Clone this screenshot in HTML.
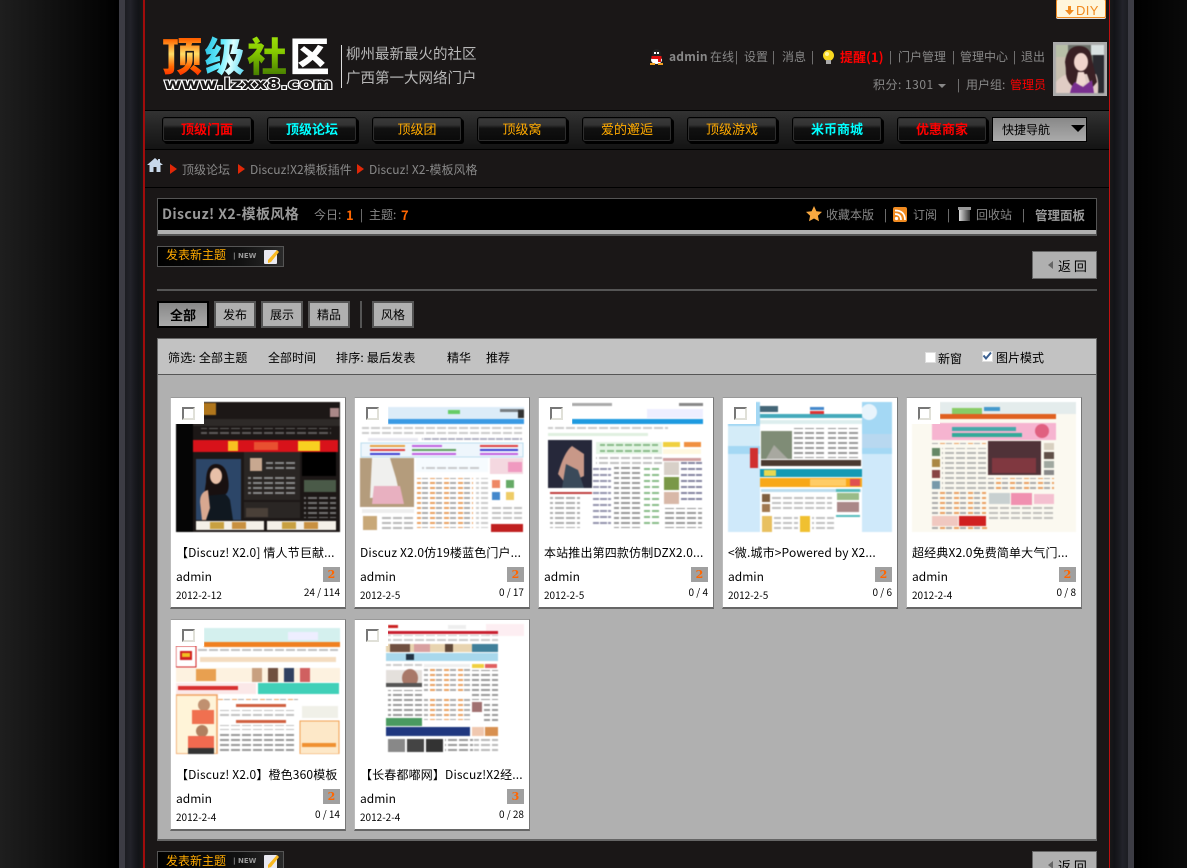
<!DOCTYPE html>
<html lang="zh"><head><meta charset="utf-8"><title>Discuz! X2-模板风格</title>
<style>
html,body{margin:0;padding:0;width:1187px;height:868px;overflow:hidden;background:#000}
body{position:relative;font:12px/14px "WenQuanYi Zen Hei","Noto Sans CJK SC",sans-serif;color:#888}
.a{position:absolute;white-space:nowrap}
svg{display:block}
.tb{background:#b0b0b0;border:2px solid #555;box-sizing:border-box;color:#000;text-align:center;height:27px;line-height:24px;font-size:12px;top:301px}
.nb{top:117px;width:90px;height:25px;box-sizing:border-box;border:1px solid #000;border-radius:3px;background:linear-gradient(#3a3a3a 0,#333 30%,#111 45%,#0a0a0a 100%);box-shadow:0 0 0 1px #2e2e2e inset,2px 2px 0 #000;text-align:center;font-size:13px;line-height:22px}
.card{position:absolute;width:176px;height:212px;background:#fff;border-top:1px solid #999;border-left:1px solid #bbb;border-right:1px solid #777;border-bottom:2px solid #666;box-sizing:border-box;color:#000}
.card svg{position:absolute;left:5px;top:4px;filter:blur(.6px)}
.ck{position:absolute;left:0;top:0;width:33px;height:26px;background:#fff}
.ck i{position:absolute;left:11px;top:9px;width:9px;height:9px;border:2px solid;border-color:#777 #e0e0d8 #e0e0d8 #777;background:#fff}
.t{position:absolute;left:5px;top:148px;width:166px;overflow:hidden;font-size:12px;line-height:14px;white-space:nowrap;letter-spacing:.15px}
.u{position:absolute;left:5px;top:172px;font-size:12px}
.d{position:absolute;left:5px;top:191px;font-size:10px;line-height:12px}
.n{position:absolute;right:5px;top:188px;font-size:10px;line-height:12px}
.b{position:absolute;right:5px;top:169px;width:17px;height:15px;background:#a0a0a0;color:#f60;font:bold 11px/15px "DejaVu Serif",serif;text-align:center}
.post{left:157px;width:127px;height:21px;box-sizing:border-box;border:1px solid #555;background:linear-gradient(90deg,#000 0,#111 65%,#2a2a2a 100%)}
.back{left:1032px;width:65px;height:28px;box-sizing:border-box;border:1px solid #666;background:#b0b0b0;color:#000;font-size:13px;line-height:27px}
</style></head><body>
<svg width="0" height="0" style="position:absolute"><defs>
<pattern id="l" width="11" height="5" patternUnits="userSpaceOnUse"><rect width="9" height="2" fill="#999"/></pattern>
<pattern id="w" width="11" height="5" patternUnits="userSpaceOnUse"><rect width="9" height="2" fill="#888"/></pattern>
<pattern id="o" width="14" height="5" patternUnits="userSpaceOnUse"><rect width="5" height="2" fill="#eaa060"/><rect x="6" width="6" height="2" fill="#aaa"/></pattern>
<pattern id="b" width="8" height="6" patternUnits="userSpaceOnUse"><rect width="7" height="2" fill="#668"/></pattern>
<pattern id="g" width="9" height="6" patternUnits="userSpaceOnUse"><rect width="7" height="2" fill="#8b8"/></pattern>
</defs></svg>

<!-- page frame -->
<div class="a" style="left:0;top:0;width:119px;height:868px;background:linear-gradient(90deg,#1e1e1e,#000)"></div>
<div class="a" style="left:119px;top:0;width:6px;height:868px;background:#3c3c44"></div>
<div class="a" style="left:125px;top:0;width:18px;height:868px;background:linear-gradient(90deg,#1c1d22 0,#22232a 30%,#1a1b20 50%,#121317 75%,#181818 100%)"></div>
<div class="a" style="left:143px;top:0;width:2px;height:868px;background:#a00c0c"></div>
<div class="a" style="left:145px;top:0;width:964px;height:868px;background:#1a1717"></div>
<div class="a" style="left:1109px;top:0;width:1px;height:868px;background:#c01010"></div>
<div class="a" style="left:1110px;top:0;width:18px;height:868px;background:linear-gradient(90deg,#181818 0,#121317 25%,#1a1b20 50%,#22232a 70%,#1c1d22 100%)"></div>
<div class="a" style="left:1128px;top:0;width:6px;height:868px;background:#3c3c44"></div>
<div class="a" style="left:1134px;top:0;width:53px;height:868px;background:linear-gradient(90deg,#000,#0a0a0a)"></div>

<!-- DIY -->
<div class="a" style="left:1056px;top:-1px;width:50px;height:19px;box-sizing:border-box;border:1px solid #f08a20;border-radius:2px;background:#fff6dc;color:#f08a20;font:13px/21px 'Liberation Sans',sans-serif;padding-left:19px;letter-spacing:.4px;box-shadow:0 1px 0 #ddd">DIY</div>
<svg class="a" style="left:1065px;top:6px" width="9" height="9"><path d="M3 0h3v4h3L4.500 9 0 4h3z" fill="#f08a20"/></svg>

<!-- logo -->
<div class="a" style="left:162px;top:30px;font:900 40px/48px 'Noto Sans CJK SC',sans-serif;letter-spacing:2.500px">
<span style="background:linear-gradient(#f00 0,#f60 25%,#fd6 50%,#f60 72%,#f00 100%);-webkit-background-clip:text;background-clip:text;color:transparent">顶</span><span style="background:linear-gradient(100deg,#2bd 0,#6ef 40%,#dff 60%,#3ce 100%);-webkit-background-clip:text;background-clip:text;color:transparent">级</span><span style="background:linear-gradient(#ae1 0,#8c0 45%,#360 100%);-webkit-background-clip:text;background-clip:text;color:transparent">社</span><span style="color:#fff">区</span></div>
<div class="a" style="left:164px;top:75px;font:bold 15px/19px 'DejaVu Sans',sans-serif;color:#1a1717;-webkit-text-stroke:2px #fff;paint-order:stroke fill;letter-spacing:.2px;transform:scaleX(1.27);transform-origin:0 0">www.lzxx8.com</div>
<div class="a" style="left:341px;top:45px;width:1px;height:43px;background:#ddd"></div>
<div class="a" style="left:346px;top:46px;font-size:14.500px;line-height:16px;color:#b8b8b8">柳州最新最火的社区</div>
<div class="a" style="left:346px;top:70px;font-size:14.500px;line-height:16px;color:#b8b8b8">广西第一大网络门户</div>

<!-- user -->
<svg class="a" style="left:649px;top:49px" width="15" height="16"><ellipse cx="7.500" cy="5" rx="4.500" ry="5" fill="#222"/><ellipse cx="7.500" cy="11" rx="5.500" ry="4" fill="#fff"/><rect x="2.500" y="7" width="10" height="3" fill="#e01010"/><rect x="9" y="9" width="3" height="4" fill="#e01010"/><path d="M1 14h5v2H1zM9 14h5v2H9z" fill="#f0a020"/><path d="M5 3h2v2H5zM8 3h2v2H8z" fill="#fff"/></svg>
<div class="a" style="left:669px;top:50px;font-weight:bold;font-size:12px;letter-spacing:.2px">admin</div>
<div class="a" style="left:710px;top:50px">在线</div><div class="a" style="left:735px;top:50px">|</div>
<div class="a" style="left:744px;top:50px">设置</div><div class="a" style="left:772px;top:50px">|</div>
<div class="a" style="left:782px;top:50px">消息</div><div class="a" style="left:811px;top:50px">|</div>
<svg class="a" style="left:822px;top:50px" width="13" height="14"><circle cx="6.500" cy="5.500" r="5.500" fill="#f8d820"/><circle cx="5" cy="4" r="2" fill="#fff6a0"/><rect x="4" y="10" width="5" height="4" fill="#aaa"/></svg>
<div class="a" style="left:840px;top:50px;color:#f00;font-weight:bold;font-size:13px">提醒(1)</div><div class="a" style="left:889px;top:50px">|</div>
<div class="a" style="left:898px;top:50px">门户管理</div><div class="a" style="left:952px;top:50px">|</div>
<div class="a" style="left:960px;top:50px">管理中心</div><div class="a" style="left:1013px;top:50px">|</div>
<div class="a" style="left:1021px;top:50px">退出</div>
<div class="a" style="left:873px;top:78px;letter-spacing:.5px">积分: 1301</div>
<div class="a" style="left:938px;top:84px;width:0;height:0;border:4px solid transparent;border-top-color:#888;border-bottom:0"></div>
<div class="a" style="left:957px;top:78px">|</div>
<div class="a" style="left:966px;top:78px">用户组:</div>
<div class="a" style="left:1010px;top:78px;color:#f00">管理员</div>
<svg class="a" style="left:1053px;top:42px" width="54" height="54"><rect width="54" height="54" fill="#aaa"/><g style="filter:blur(.5px)"><rect x="3" y="3" width="48" height="48" fill="#6a6f68"/><rect x="3" y="3" width="12" height="12" fill="#b8c0a8"/><rect x="3" y="15" width="10" height="25" fill="#c8c0b0"/><rect x="38" y="3" width="13" height="10" fill="#d8e0e0"/><rect x="40" y="13" width="11" height="38" fill="#2a2a30"/><path d="M3 40q6-7 12-8l28 0q3 6 2 19H3z" fill="#e0ccc4"/><path d="M12 20q2-16 14-16t13 14q3 12 5 22l-5 6-5-14-9 0-3 14q-8-5-9-14 0-6-1-12z" fill="#3a2024"/><ellipse cx="28" cy="20" rx="7" ry="9" fill="#f0d4cc"/><path d="M17 51q2-9 5-11l8 5 9-7 2 13z" fill="#7a3090"/><path d="M25 30h6l2 11-5 3-5-3z" fill="#f0d8d0"/></g></svg>

<!-- nav -->
<div class="a" style="left:145px;top:110px;width:964px;height:40px;box-sizing:border-box;border-top:1px solid #000;border-bottom:1px solid #000;background:linear-gradient(#333 0,#262626 35%,#141414 100%)"></div>
<div class="a nb" style="left:162px;color:#f00;font-weight:bold">顶级门面</div>
<div class="a nb" style="left:267px;color:#0ff;font-weight:bold">顶级论坛</div>
<div class="a nb" style="left:372px;color:#fa0">顶级团</div>
<div class="a nb" style="left:477px;color:#fa0">顶级窝</div>
<div class="a nb" style="left:582px;color:#fa0">爱的邂逅</div>
<div class="a nb" style="left:687px;color:#fa0">顶级游戏</div>
<div class="a nb" style="left:792px;color:#0ff;font-weight:bold">米币商城</div>
<div class="a nb" style="left:897px;color:#f00;font-weight:bold">优惠商家</div>
<div class="a" style="left:992px;top:117px;width:95px;height:25px;box-sizing:border-box;border:1px solid #000;background:linear-gradient(#888,#aaa);color:#000;font-size:12px;line-height:24px;padding-left:9px">快捷导航</div>
<div class="a" style="left:1071px;top:125px;width:0;height:0;border:7px solid transparent;border-top:7px solid #000;border-bottom:0"></div>

<!-- breadcrumb -->
<svg class="a" style="left:147px;top:158px" width="16" height="14"><path d="M8 0L0 7h2.500v7H6.500V9h3v5h4V7H16l-3-2.600V1h-2v1.600z" fill="#c8d8ea"/></svg>
<svg class="a" style="left:170px;top:164px" width="7" height="10"><path d="M0 0l7 5-7 5z" fill="#e02808"/></svg>
<div class="a" style="left:182px;top:163px">顶级论坛</div>
<svg class="a" style="left:238px;top:164px" width="7" height="10"><path d="M0 0l7 5-7 5z" fill="#e02808"/></svg>
<div class="a" style="left:250px;top:163px">Discuz!X2模板插件</div>
<svg class="a" style="left:357px;top:164px" width="7" height="10"><path d="M0 0l7 5-7 5z" fill="#e02808"/></svg>
<div class="a" style="left:369px;top:163px">Discuz! X2-模板风格</div>
<div class="a" style="left:145px;top:187px;width:964px;height:1px;background:#000"></div>

<!-- title -->
<div class="a" style="left:157px;top:198px;width:940px;height:38px;box-sizing:border-box;border:1px solid #555;background:#000;border-bottom:2px solid #555"><div style="position:absolute;left:0;right:0;bottom:0;height:4px;background:#b0b0b0"></div></div>
<div class="a" style="left:162px;top:207px;font-weight:bold;font-size:14px;color:#999;letter-spacing:.4px">Discuz! X2-模板风格</div>
<div class="a" style="left:314px;top:208px">今日:</div>
<div class="a" style="left:346px;top:208px;color:#f60;font-weight:bold;font-size:13px">1</div>
<div class="a" style="left:360px;top:208px">|</div>
<div class="a" style="left:369px;top:208px">主题:</div>
<div class="a" style="left:401px;top:208px;color:#f60;font-weight:bold;font-size:13px">7</div>
<svg class="a" style="left:806px;top:206px" width="16" height="16"><path d="M8 0l2.400 5.200 5.600.7-4.100 3.800 1.100 5.600L8 12.500 3 15.300l1.100-5.600L0 5.900l5.600-.7z" fill="#f8a840"/></svg>
<div class="a" style="left:826px;top:208px">收藏本版</div><div class="a" style="left:884px;top:208px">|</div>
<svg class="a" style="left:893px;top:207px" width="14" height="15"><rect width="14" height="15" rx="2" fill="#f08a20"/><circle cx="3.500" cy="11.500" r="1.600" fill="#fff"/><path d="M2 7q6 0 6 6M2 3.500q10 0 10 9.500" stroke="#fff" stroke-width="1.700" fill="none"/></svg>
<div class="a" style="left:913px;top:208px">订阅</div><div class="a" style="left:947px;top:208px">|</div>
<svg class="a" style="left:958px;top:207px" width="13" height="14"><defs><linearGradient id="tr"><stop offset="0" stop-color="#ddd"/><stop offset=".5" stop-color="#888"/><stop offset="1" stop-color="#333"/></linearGradient></defs><rect y="0" width="13" height="3" fill="#999"/><rect x="1" y="3" width="11" height="11" fill="url(#tr)"/></svg>
<div class="a" style="left:976px;top:208px">回收站</div><div class="a" style="left:1022px;top:208px">|</div>
<div class="a" style="left:1035px;top:208px;font-weight:bold;font-size:12.500px;color:#999">管理面板</div>

<!-- post / back -->
<div class="a post" style="top:246px"></div>
<div class="a" style="left:166px;top:248px;color:#fa0">发表新主题</div>
<div class="a" style="left:233px;top:249px;font:bold 7px/14px 'DejaVu Sans',sans-serif;color:#999">| NEW</div>
<svg class="a" style="left:264px;top:249px" width="16" height="15"><rect y="1" width="13" height="14" rx="1" fill="#e8e8f0"/><path d="M4 11L13 1l2 2-8 10-3 1z" fill="#f8b820"/></svg>
<div class="a back" style="top:251px"><span style="position:absolute;left:15px;top:9px;border:4px solid transparent;border-right:5px solid #666;border-left:0"></span><span style="position:absolute;left:25px;top:0">返 回</span></div>
<div class="a" style="left:157px;top:289px;width:940px;height:2px;background:#555"></div>

<!-- tabs -->
<div class="a tb" style="left:157px;width:52px;border-color:#000;background:linear-gradient(#888,#aaa);font-weight:bold;font-size:13px">全部</div>
<div class="a tb" style="left:214px;width:42px">发布</div>
<div class="a tb" style="left:261px;width:42px">展示</div>
<div class="a tb" style="left:308px;width:42px">精品</div>
<div class="a" style="left:360px;top:301px;width:2px;height:27px;background:#555"></div>
<div class="a tb" style="left:372px;width:42px">风格</div>

<!-- filter -->
<div class="a" style="left:157px;top:338px;width:940px;height:503px;box-sizing:border-box;border:1px solid #666;border-width:1px 1px 2px;background:#b0b0b0"></div>
<div class="a" style="left:158px;top:339px;width:938px;height:36px;background:#c2c2c2;border-bottom:1px solid #555;box-sizing:border-box"></div>
<div class="a" style="left:168px;top:351px;color:#000;letter-spacing:.2px">筛选: 全部主题</div>
<div class="a" style="left:268px;top:351px;color:#000">全部时间</div>
<div class="a" style="left:336px;top:351px;color:#000;letter-spacing:.2px">排序: 最后发表</div>
<div class="a" style="left:447px;top:351px;color:#000">精华</div>
<div class="a" style="left:486px;top:351px;color:#000">推荐</div>
<div class="a" style="left:925px;top:352px;width:9px;height:9px;background:#fff;border:1px solid #ddd"></div>
<div class="a" style="left:938px;top:352px;color:#000">新窗</div>
<div class="a" style="left:982px;top:351px;width:9px;height:9px;background:#fff;border:1px solid #ddd"></div>
<svg class="a" style="left:982px;top:351px" width="10" height="10"><path d="M1.500 4.500l2.500 3 5-6" stroke="#3a5f90" stroke-width="2" fill="none"/></svg>
<div class="a" style="left:996px;top:351px;color:#000">图片模式</div>

<!-- card 1 -->
<div class="card" style="left:170px;top:397px">
<svg width="164" height="130"><rect width="164" height="130" fill="#1c1716"/><rect width="17" height="130" fill="#050505"/><rect x="17" y="17" width="147" height="7" fill="#2e2a28"/><rect x="26" y="1" width="14" height="12" fill="#f0a020" opacity=".7"/><rect x="154" y="6" width="9" height="9" fill="#a88"/><rect x="25" y="26" width="130" height="8" fill="url(#w)" opacity=".6"/><rect x="17" y="38" width="145" height="12" fill="#d8121a"/><rect x="52" y="39" width="10" height="10" fill="#f8c020"/><rect x="78" y="40" width="24" height="8" fill="#e85030"/><rect x="122" y="39" width="22" height="10" fill="#f8d020"/><rect x="20" y="57" width="45" height="61" fill="#2c4668"/><path d="M28 118q-3-28 10-32 12 4 16 12l3 20z" fill="#101820"/><path d="M30 80q0-18 10-18t12 14q2 12-2 16l-22 2z" fill="#181010"/><ellipse cx="40" cy="74" rx="6" ry="8" fill="#e8c0a8"/><path d="M24 100q0-10 8-12l2 18-4 12h-4z" fill="#d8a890"/><rect x="68" y="50" width="56" height="48" fill="#2a2624"/><rect x="74" y="56" width="12" height="13" fill="#c8a890"/><rect x="90" y="58" width="30" height="10" fill="url(#w)"/><rect x="72" y="72" width="48" height="20" fill="url(#w)"/><rect x="68" y="100" width="56" height="16" fill="#2a2624"/><rect x="70" y="106" width="22" height="9" fill="#4a4038"/><rect x="126" y="50" width="34" height="24" fill="#000"/><rect x="128" y="78" width="32" height="12" fill="#4a5a48"/><rect x="128" y="92" width="32" height="24" fill="url(#w)" opacity=".8"/><rect x="20" y="119" width="68" height="9" fill="#f4f0e8"/><rect x="91" y="119" width="69" height="9" fill="#f4f0e8"/><rect x="34" y="120" width="14" height="7" fill="#c8a040"/><rect x="56" y="120" width="14" height="7" fill="#c89040"/><rect x="106" y="120" width="14" height="7" fill="#c8a040"/><rect x="128" y="120" width="14" height="7" fill="#c89040"/></svg>
<div class="ck"><i></i></div>
<div class="t">【Discuz! X2.0] 情人节巨献...</div><div class="u">admin</div><div class="b">2</div><div class="d">2012-2-12</div><div class="n">24 / 114</div></div>

<!-- card 2 -->
<div class="card" style="left:354px;top:397px">
<svg width="164" height="130"><rect width="164" height="130" fill="#fff"/><rect x="28" y="5" width="136" height="12" fill="#dcecf8"/><rect x="140" y="7" width="24" height="3" fill="#333" opacity=".6"/><rect x="158" y="8" width="6" height="8" fill="#333"/><rect x="88" y="8" width="12" height="4" fill="#6c6"/><rect x="28" y="17" width="136" height="5" fill="#3a9ae4"/><rect x="2" y="24" width="160" height="9" fill="url(#l)" opacity=".5"/><rect x="8" y="36" width="50" height="3" fill="#e8e8f0"/><rect x="62" y="36" width="100" height="4" fill="url(#b)" opacity=".5"/><rect x="1" y="41" width="162" height="14" fill="#eef6fc" stroke="#bde" stroke-width="1"/><rect x="10" y="43" width="35" height="2" fill="#e8a040"/><rect x="52" y="43" width="30" height="2" fill="#c060e0"/><rect x="120" y="43" width="38" height="2" fill="#e04040"/><rect x="10" y="47" width="35" height="2" fill="#e04040"/><rect x="52" y="47" width="44" height="2" fill="#60a060"/><rect x="120" y="47" width="38" height="2" fill="#4040d0"/><rect x="10" y="51" width="30" height="2" fill="#4040d0"/><rect x="52" y="51" width="44" height="2" fill="#c060e0"/><rect x="120" y="51" width="38" height="2" fill="#c060e0"/><rect y="56" width="54" height="49" fill="#b49c7c"/><path d="M12 56h18l6 20 4 18-30 2z" fill="#f0f0ee"/><path d="M14 84h26l4 18H12z" fill="#e8b0c0"/><rect x="56" y="56" width="72" height="14" fill="#f6fbfe"/><rect x="62" y="62" width="58" height="8" fill="url(#l)" opacity=".5"/><rect x="57" y="76" width="56" height="50" fill="url(#o)"/><rect x="116" y="76" width="12" height="50" fill="url(#l)" opacity=".5"/><rect x="130" y="56" width="33" height="16" fill="#f4d8e0"/><rect x="148" y="60" width="14" height="10" fill="#f09ac0"/><rect x="132" y="78" width="8" height="8" fill="#e86"/><rect x="146" y="78" width="8" height="8" fill="#6a6"/><rect x="132" y="90" width="8" height="8" fill="#48c"/><rect x="146" y="90" width="8" height="8" fill="#ec6"/><rect x="132" y="102" width="30" height="18" fill="url(#l)" opacity=".6"/><rect x="131" y="122" width="32" height="8" fill="#c02020"/><rect x="2" y="107" width="52" height="4" fill="#eee"/><rect x="3" y="114" width="14" height="14" fill="#c8a878"/><rect x="20" y="114" width="34" height="14" fill="url(#l)" opacity=".7"/></svg>
<div class="ck"><i></i></div>
<div class="t">Discuz X2.0仿19楼蓝色门户...</div><div class="u">admin</div><div class="b">2</div><div class="d">2012-2-5</div><div class="n">0 / 17</div></div>

<!-- card 3 -->
<div class="card" style="left:538px;top:397px">
<svg width="164" height="130"><rect width="164" height="130" fill="#fff"/><rect x="28" y="1" width="40" height="3" fill="#aaa"/><rect x="135" y="1" width="24" height="3" fill="#888"/><rect x="103" y="7" width="56" height="9" fill="#eef"/><rect x="28" y="17" width="131" height="5" fill="#1e9ae0"/><rect x="4" y="24" width="120" height="5" fill="url(#l)" opacity=".5"/><rect x="4" y="31" width="100" height="3" fill="#e0f0e0"/><rect x="4" y="38" width="44" height="48" fill="#26283a"/><path d="M14 72q6-22 14-28l12 8v22l-18 8z" fill="#c89888"/><path d="M22 62l12 6 6 18H18z" fill="#3a4a5a"/><rect x="52" y="40" width="66" height="12" fill="#e4f4e4"/><rect x="56" y="42" width="58" height="8" fill="url(#g)"/><rect x="52" y="54" width="66" height="8" fill="url(#l)" opacity=".6"/><rect x="49" y="64" width="18" height="62" fill="url(#b)" opacity=".7"/><rect x="70" y="64" width="26" height="62" fill="url(#l)"/><rect x="100" y="64" width="16" height="62" fill="url(#g)"/><rect x="119" y="40" width="17" height="5" fill="#f0d040"/><rect x="140" y="40" width="17" height="5" fill="#f09040"/><rect x="119" y="47" width="38" height="5" fill="#fff8e0"/><rect x="119" y="56" width="38" height="3" fill="#d0a0a0"/><rect x="120" y="60" width="15" height="13" fill="#d8d0c8"/><rect x="120" y="75" width="15" height="13" fill="#7a9848"/><rect x="120" y="90" width="15" height="12" fill="#d8b8a8"/><rect x="137" y="60" width="21" height="42" fill="url(#b)" opacity=".8"/><rect x="120" y="106" width="38" height="20" fill="url(#l)"/><rect x="6" y="90" width="42" height="2" fill="#c04040"/><rect x="6" y="94" width="30" height="32" fill="url(#l)" opacity=".8"/></svg>
<div class="ck"><i></i></div>
<div class="t">本站推出第四款仿制DZX2.0...</div><div class="u">admin</div><div class="b">2</div><div class="d">2012-2-5</div><div class="n">0 / 4</div></div>

<!-- card 4 -->
<div class="card" style="left:722px;top:397px">
<svg width="164" height="130"><rect width="164" height="130" fill="#cfe9fa"/><rect width="164" height="52" fill="#a4d8f4"/><circle cx="141" cy="10" r="8" fill="#e8f4fc"/><rect x="0" y="24" width="32" height="20" fill="#d4ecf8"/><rect x="134" y="32" width="30" height="14" fill="#b8d8f0"/><rect x="32" y="0" width="102" height="130" fill="#fff"/><rect x="32" y="4" width="18" height="6" fill="#467"/><rect x="82" y="5" width="14" height="3" fill="#48c"/><rect x="82" y="9" width="14" height="3" fill="#d33"/><rect x="32" y="12" width="102" height="4" fill="#4ab"/><rect x="32" y="18" width="102" height="4" fill="#dee"/><rect x="33" y="29" width="31" height="28" fill="#7f8c76"/><path d="M38 57l8-14 14 14z" fill="#a8a8a0"/><rect x="66" y="26" width="30" height="30" fill="url(#l)"/><rect x="100" y="26" width="32" height="30" fill="url(#l)"/><rect x="22" y="46" width="8" height="20" fill="#d03030"/><rect x="33" y="58" width="100" height="6" fill="#4a3a30"/><rect x="32" y="67" width="102" height="8" fill="#159ab4"/><rect x="36" y="68" width="12" height="6" fill="#e8d850"/><rect x="32" y="76" width="102" height="9" fill="#f8a818"/><rect x="82" y="77" width="36" height="7" fill="#fc6"/><rect x="122" y="77" width="10" height="7" fill="#e05050"/><rect x="33" y="87" width="100" height="3" fill="#bde"/><rect x="34" y="92" width="8" height="8" fill="#806040"/><rect x="34" y="102" width="8" height="8" fill="#a07850"/><rect x="44" y="92" width="60" height="18" fill="url(#l)" opacity=".6"/><rect x="108" y="87" width="24" height="3" fill="#5bb"/><rect x="109" y="91" width="22" height="7" fill="#9b8"/><rect x="109" y="100" width="22" height="10" fill="#a88"/><rect x="108" y="113" width="24" height="2" fill="#5bb"/><rect x="34" y="114" width="10" height="16" fill="#e8c060"/><rect x="46" y="114" width="24" height="16" fill="url(#l)" opacity=".6"/><rect x="72" y="114" width="10" height="16" fill="#f0c030"/><rect x="84" y="114" width="22" height="16" fill="url(#l)" opacity=".6"/></svg>
<div class="ck"><i></i></div>
<div class="t">&lt;微.城市&gt;Powered by X2...</div><div class="u">admin</div><div class="b">2</div><div class="d">2012-2-5</div><div class="n">0 / 6</div></div>

<!-- card 5 -->
<div class="card" style="left:906px;top:397px">
<svg width="164" height="130"><rect width="164" height="130" fill="#fbf9f0"/><rect x="28" y="0" width="136" height="12" fill="#e4ecec"/><rect x="40" y="6" width="30" height="6" fill="#8c6"/><rect x="72" y="5" width="16" height="4" fill="#49c"/><rect x="28" y="12" width="116" height="5" fill="#e06020"/><rect x="20" y="21" width="124" height="17" fill="#f6b4d0"/><rect x="40" y="25" width="64" height="4" fill="#4aa"/><rect x="40" y="31" width="70" height="4" fill="#3a9"/><circle cx="130" cy="29" r="7" fill="#e06080"/><rect x="20" y="41" width="54" height="4" fill="url(#o)"/><rect x="20" y="46" width="8" height="8" fill="#686"/><rect x="20" y="57" width="8" height="8" fill="#a84"/><rect x="20" y="68" width="8" height="8" fill="#844"/><rect x="20" y="79" width="8" height="8" fill="#79a"/><rect x="30" y="46" width="44" height="42" fill="url(#l)" opacity=".7"/><rect x="76" y="39" width="53" height="34" fill="#503238"/><rect x="80" y="56" width="44" height="15" fill="#803840"/><rect x="132" y="41" width="10" height="7" fill="#d8d0c0"/><rect x="132" y="50" width="10" height="7" fill="#605048"/><rect x="132" y="59" width="10" height="7" fill="#a0a8a0"/><rect x="132" y="68" width="10" height="5" fill="#888"/><rect x="76" y="76" width="66" height="12" fill="url(#o)"/><rect x="20" y="90" width="54" height="24" fill="url(#o)"/><rect x="77" y="91" width="21" height="11" fill="#c8d0d0"/><rect x="99" y="91" width="21" height="12" fill="#f090b0"/><rect x="122" y="92" width="20" height="10" fill="#f4c0d0"/><rect x="76" y="104" width="66" height="16" fill="url(#l)" opacity=".6"/><rect x="20" y="114" width="26" height="10" fill="#f0c8c0"/><rect x="47" y="114" width="27" height="10" fill="#d02020"/><rect x="20" y="125" width="56" height="4" fill="url(#o)"/></svg>
<div class="ck"><i></i></div>
<div class="t">超经典X2.0免费简单大气门...</div><div class="u">admin</div><div class="b">2</div><div class="d">2012-2-4</div><div class="n">0 / 8</div></div>

<!-- card 6 -->
<div class="card" style="left:170px;top:619px">
<svg width="164" height="130"><rect width="164" height="130" fill="#fff"/><rect x="28" y="4" width="136" height="14" fill="#d4f0ee"/><rect x="112" y="8" width="30" height="8" fill="#eef"/><rect x="28" y="18" width="136" height="5" fill="#f08020"/><rect y="22" width="20" height="21" fill="#fff" stroke="#d02020"/><rect x="4" y="27" width="12" height="9" fill="#d02020"/><rect x="6" y="29" width="8" height="4" fill="#f0c020"/><rect x="22" y="25" width="140" height="5" fill="url(#l)" opacity=".6"/><rect x="24" y="33" width="136" height="5" fill="#f4dcc0"/><rect x="0" y="44" width="164" height="14" fill="#fdf2e0"/><rect x="20" y="45" width="20" height="12" fill="#e8a050"/><rect x="76" y="44" width="10" height="14" fill="#c8a080"/><rect x="92" y="44" width="10" height="14" fill="#705040"/><rect x="108" y="44" width="10" height="14" fill="#304060"/><rect x="124" y="44" width="10" height="14" fill="#d06060"/><rect x="0" y="59" width="80" height="11" fill="#fbe8e8"/><rect x="2" y="62" width="60" height="4" fill="#d83030"/><rect x="82" y="59" width="81" height="11" fill="#40d0b8"/><rect x="0" y="71" width="41" height="59" fill="#fff4d8" stroke="#f0a060" stroke-width="1.500"/><circle cx="28" cy="81" r="6" fill="#c09070"/><rect x="16" y="86" width="22" height="14" fill="#f07050"/><circle cx="26" cy="107" r="6" fill="#b08060"/><rect x="12" y="112" width="26" height="12" fill="#f06a50"/><rect x="12" y="124" width="26" height="6" fill="#333"/><rect x="42" y="72" width="80" height="4" fill="url(#o)"/><rect x="60" y="80" width="50" height="3" fill="#d06040"/><rect x="44" y="86" width="74" height="8" fill="url(#l)" opacity=".6"/><rect x="60" y="96" width="50" height="3" fill="#d06040"/><rect x="44" y="101" width="74" height="5" fill="url(#l)" opacity=".6"/><rect x="44" y="110" width="74" height="20" fill="url(#l)"/><rect x="126" y="82" width="36" height="12" fill="#f0f0e8"/><rect x="124" y="97" width="39" height="33" fill="#fde8c8" stroke="#f0a050"/><rect x="126" y="119" width="34" height="4" fill="#f09030"/></svg>
<div class="ck"><i></i></div>
<div class="t">【Discuz! X2.0】橙色360模板</div><div class="u">admin</div><div class="b">2</div><div class="d">2012-2-4</div><div class="n">0 / 14</div></div>

<!-- card 7 -->
<div class="card" style="left:354px;top:619px">
<svg width="164" height="130"><rect width="164" height="130" fill="#fff"/><rect x="126" y="0" width="38" height="12" fill="#fdeef2"/><rect x="28" y="1" width="10" height="3" fill="#c22"/><rect x="88" y="1" width="18" height="4" fill="#eee"/><rect x="26" y="7" width="112" height="3" fill="#c82030"/><rect x="26" y="11" width="112" height="6" fill="url(#l)" opacity=".5"/><rect x="26" y="20" width="112" height="8" fill="#e8d4b0"/><rect x="30" y="20" width="20" height="8" fill="#705040"/><rect x="54" y="20" width="16" height="8" fill="#d8a0a0"/><rect x="85" y="20" width="8" height="8" fill="#604838"/><rect x="112" y="20" width="26" height="8" fill="#40809a"/><rect x="26" y="29" width="112" height="8" fill="#a8d8ec"/><rect x="46" y="30" width="8" height="6" fill="#234"/><rect x="26" y="39" width="36" height="4" fill="url(#l)" opacity=".5"/><rect x="26" y="46" width="36" height="16" fill="#e4e0dc"/><ellipse cx="50" cy="54" rx="8" ry="9" fill="#a87868"/><rect x="26" y="59" width="36" height="4" fill="#555"/><rect x="28" y="66" width="34" height="27" fill="url(#l)"/><rect x="64" y="40" width="46" height="3" fill="#eee"/><rect x="64" y="45" width="46" height="24" fill="url(#o)"/><rect x="64" y="72" width="46" height="24" fill="url(#o)"/><rect x="112" y="40" width="12" height="4" fill="#f0d040"/><rect x="125" y="40" width="12" height="4" fill="#e06060"/><rect x="112" y="46" width="26" height="30" fill="url(#l)"/><rect x="112" y="78" width="10" height="10" fill="#a07070"/><rect x="124" y="78" width="14" height="20" fill="url(#l)"/><rect x="26" y="94" width="36" height="8" fill="#4a9a60"/><rect x="26" y="103" width="84" height="9" fill="#203880"/><rect x="112" y="103" width="12" height="9" fill="#f0c8b0"/><rect x="125" y="103" width="13" height="9" fill="#d89050"/><rect x="28" y="115" width="17" height="13" fill="#888"/><rect x="47" y="115" width="17" height="13" fill="#444"/><rect x="66" y="115" width="17" height="13" fill="#333"/><rect x="85" y="115" width="28" height="13" fill="url(#l)"/><rect x="114" y="115" width="24" height="13" fill="url(#l)" opacity=".7"/></svg>
<div class="ck"><i></i></div>
<div class="t">【长春都嘟网】Discuz!X2经...</div><div class="u">admin</div><div class="b">3</div><div class="d">2012-2-4</div><div class="n">0 / 28</div></div>

<!-- bottom -->
<div class="a post" style="top:851px"></div>
<div class="a" style="left:166px;top:854px;color:#fa0">发表新主题</div>
<div class="a" style="left:233px;top:854px;font:bold 7px/14px 'DejaVu Sans',sans-serif;color:#999">| NEW</div>
<svg class="a" style="left:264px;top:854px" width="16" height="15"><rect y="1" width="13" height="14" rx="1" fill="#e8e8f0"/><path d="M4 11L13 1l2 2-8 10-3 1z" fill="#f8b820"/></svg>
<div class="a back" style="top:851px"><span style="position:absolute;left:15px;top:9px;border:4px solid transparent;border-right:5px solid #666;border-left:0"></span><span style="position:absolute;left:25px;top:0">返 回</span></div>
</body></html>
